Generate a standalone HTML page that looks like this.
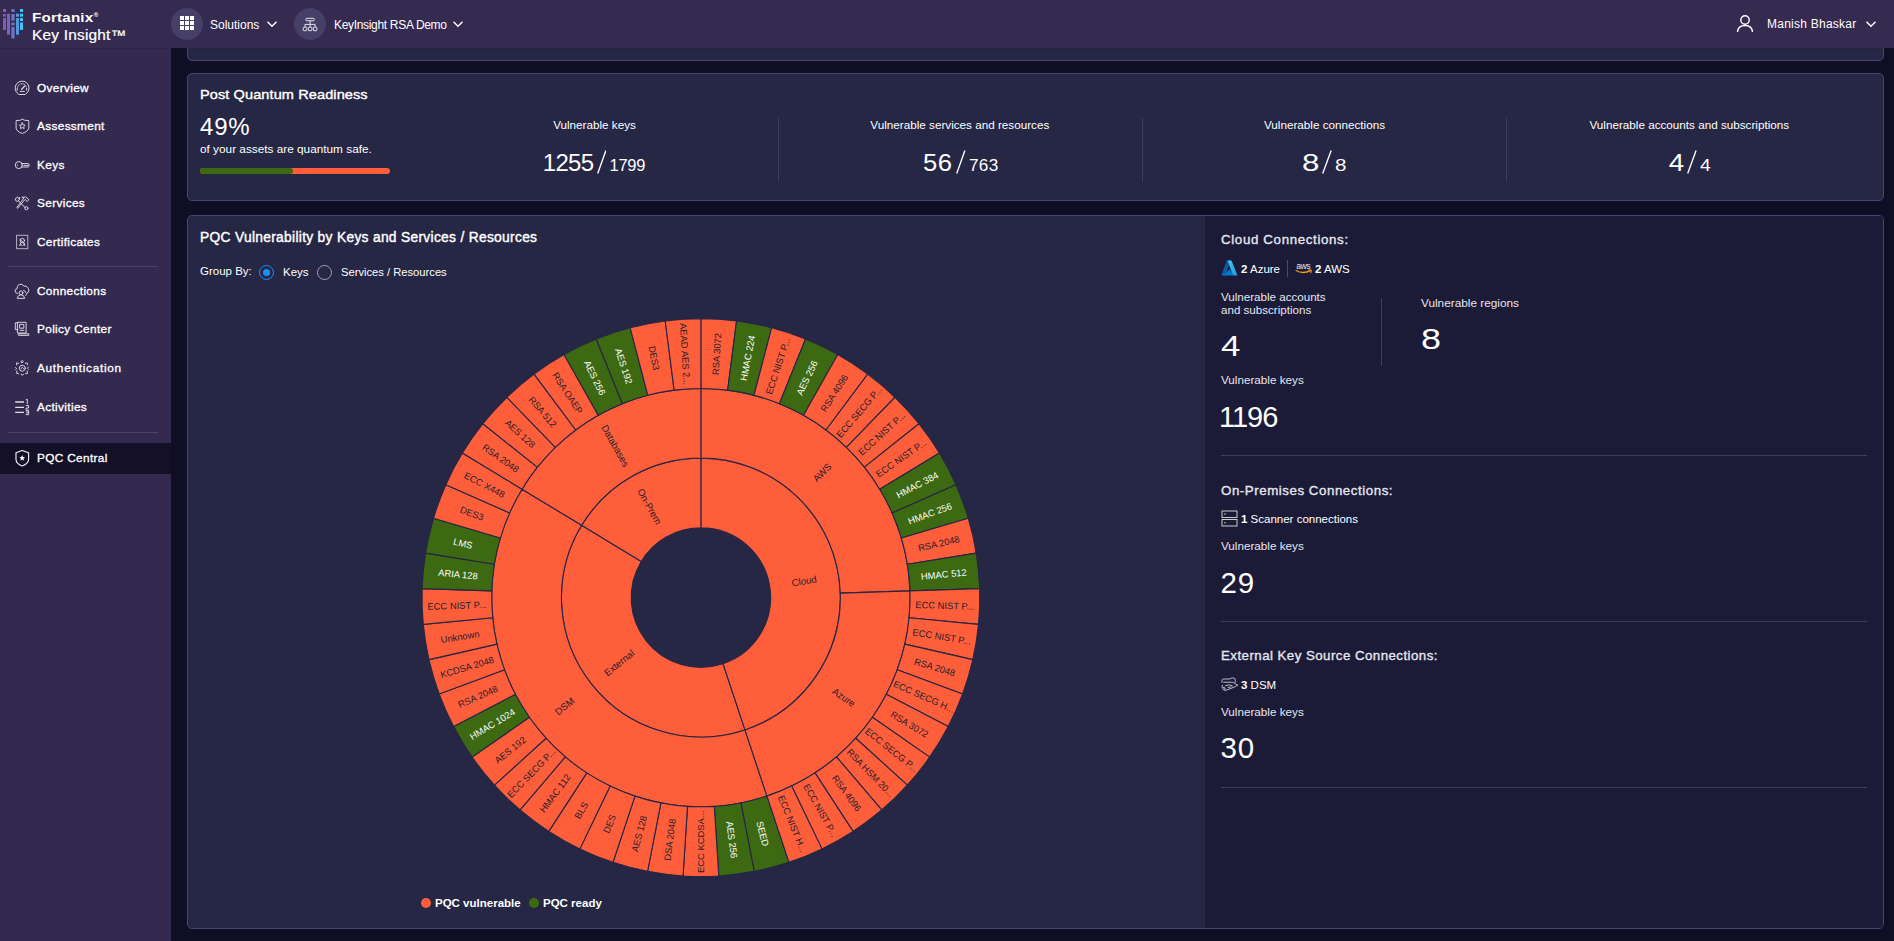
<!DOCTYPE html>
<html><head><meta charset="utf-8">
<style>
*{margin:0;padding:0;box-sizing:border-box}
html,body{width:1894px;height:941px;overflow:hidden;background:#100e24;font-family:"Liberation Sans", sans-serif;color:#fff}
.abs{position:absolute}
#header{position:absolute;left:0;top:0;width:1894px;height:48px;background:#352a50;z-index:10;box-shadow:0 1px 0 rgba(20,15,40,0.18)}
#side{position:absolute;left:0;top:48px;width:171px;height:893px;background:#342a4f}
.nav-ic{position:absolute;left:12px;width:20px;height:20px}
.nav-t{position:absolute;left:37px;height:16px;line-height:16px;font-size:11.8px;font-weight:normal;-webkit-text-stroke:0.32px #fff;white-space:nowrap;letter-spacing:0.35px}
.hl{position:absolute;left:0;top:443px;width:171px;height:31px;background:#131027}
.sdiv{position:absolute;left:8px;width:150px;height:1px;background:#4b4169}
.card{position:absolute;left:187px;width:1697px;background:#262645;border:1px solid #4b4370;border-radius:5px}
.stat-l{position:absolute;top:117.5px;width:400px;text-align:center;font-size:11.7px;white-space:nowrap}
.stat-n{position:absolute;top:148px;width:400px;text-align:center;white-space:nowrap;height:30px;line-height:30px}
.big{font-size:24px}
.sl{font-size:24px;margin:0 2.5px 0 3px}
.small{font-size:16.5px}
.vdiv{position:absolute;top:118px;width:1px;height:64px;background:#3e3c5e}
.t{position:absolute;white-space:nowrap}
.hr{position:absolute;left:1221px;width:646px;height:1px;background:#3d3b60}
</style></head><body>
<div id="header">
  <svg class="abs" style="left:0;top:0" width="30" height="48" viewBox="0 0 30 48">
    <rect x="3" y="9" width="3" height="3" fill="#8758b8"/><rect x="3" y="14" width="3" height="2.6" fill="#8758b8"/><rect x="3" y="18" width="3" height="12" fill="#8758b8"/>
    <rect x="7" y="13.7" width="3" height="21" fill="#7863bf"/>
    <rect x="11.3" y="9" width="3.3" height="3" fill="#6876c8"/><rect x="11.3" y="14" width="3.3" height="6.7" fill="#6876c8"/><rect x="11.3" y="22.5" width="3.3" height="3" fill="#6876c8"/><rect x="11.3" y="27" width="3.3" height="11.4" fill="#6876c8"/>
    <rect x="16" y="13.7" width="3" height="3" fill="#4f98da"/><rect x="16" y="18" width="3" height="16.7" fill="#4f98da"/>
    <rect x="20" y="9" width="3" height="3" fill="#38c6f2"/><rect x="20" y="13.7" width="3" height="3" fill="#38c6f2"/><rect x="20" y="18" width="3" height="3" fill="#38c6f2"/><rect x="20" y="22.5" width="3" height="7.5" fill="#38c6f2"/>
  </svg>
  <div class="t" style="left:31.5px;top:7px;font-size:13.6px;font-weight:bold;line-height:16px;letter-spacing:0.15px;transform:scaleX(1.12);transform-origin:left center">Fortanix<span style="font-size:6px;vertical-align:5px">®</span></div>
  <div class="t" style="left:31.5px;top:26px;font-size:14px;line-height:18px;letter-spacing:0.2px;transform:scaleX(1.1);transform-origin:left center;-webkit-text-stroke:0.2px #fff">Key Insight™</div>
  <div class="abs" style="left:171px;top:8px;width:32px;height:32px;border-radius:50%;background:#463f67"></div>
  <svg class="abs" style="left:179px;top:15px" width="16" height="16" viewBox="0 0 16 16"><g fill="#fff">
    <rect x="1" y="1" width="4" height="4"/><rect x="6" y="1" width="4" height="4"/><rect x="11" y="1" width="4" height="4"/>
    <rect x="1" y="6" width="4" height="4"/><rect x="6" y="6" width="4" height="4"/><rect x="11" y="6" width="4" height="4"/>
    <rect x="1" y="11" width="4" height="4"/><rect x="6" y="11" width="4" height="4"/><rect x="11" y="11" width="4" height="4"/></g></svg>
  <div class="t" style="left:210px;top:17px;font-size:12px;line-height:16px">Solutions</div>
  <svg class="abs" style="left:266px;top:20px" width="12" height="8" viewBox="0 0 12 8"><path d="M1.5 1.8 L6 6.3 L10.5 1.8" stroke="#fff" stroke-width="1.4" fill="none"/></svg>
  <div class="abs" style="left:294px;top:8px;width:32px;height:32px;border-radius:50%;background:#463f67"></div>
  <svg class="abs" style="left:300px;top:15px" width="20" height="20" viewBox="0 0 20 20"><g stroke="#e2e0ec" stroke-width="1" fill="none">
    <rect x="5.9" y="3.3" width="8.4" height="2.5" rx="0.9"/><path d="M10.1 5.8 V9.4 M5 12.1 V9.4 H15.1 V12.1 M10.1 9.4 V12.1"/>
    <rect x="3.2" y="12.2" width="3.6" height="3.5" rx="0.7"/><rect x="8.3" y="12.2" width="3.6" height="3.5" rx="0.7"/><rect x="13.3" y="12.2" width="3.6" height="3.5" rx="0.7"/></g></svg>
  <div class="t" style="left:334px;top:17px;font-size:12px;line-height:16px;letter-spacing:-0.32px">KeyInsight RSA Demo</div>
  <svg class="abs" style="left:452px;top:20px" width="12" height="8" viewBox="0 0 12 8"><path d="M1.5 1.8 L6 6.3 L10.5 1.8" stroke="#fff" stroke-width="1.4" fill="none"/></svg>
  <svg class="abs" style="left:1736px;top:14px" width="18" height="19" viewBox="0 0 18 19"><g stroke="#fff" stroke-width="1.4" fill="none"><circle cx="9" cy="6" r="4.2"/><path d="M1.5 18 Q2 11.5 9 11.5 Q16 11.5 16.5 18"/></g></svg>
  <div class="t" style="left:1767px;top:15.5px;font-size:12px;line-height:16px;letter-spacing:0.25px">Manish Bhaskar</div>
  <svg class="abs" style="left:1865px;top:20px" width="12" height="8" viewBox="0 0 12 8"><path d="M1.5 1.8 L6 6.3 L10.5 1.8" stroke="#fff" stroke-width="1.4" fill="none"/></svg>
</div>
<div id="side">
</div>
<div class="hl"></div>
<div class="sdiv" style="top:266px"></div>
<div class="sdiv" style="top:432px"></div>
<div class="nav-ic" style="top:78px"><svg width="20" height="20" viewBox="0 0 20 20"><path d="M6 15.8 A7 7 0 1 1 14.2 15.8" stroke="#dddbe8" stroke-width="0.95" fill="none" stroke-linecap="round" stroke-linejoin="round"/><path d="M5.6 9 A4.6 4.6 0 0 1 14.4 9" stroke="#dddbe8" stroke-width="0.95" fill="none" stroke-linecap="round" stroke-linejoin="round" stroke-dasharray="1.2 1.3"/><path d="M5.2 12.2 V10.2 M14.6 12.2 V10.2" stroke="#dddbe8" stroke-width="0.95" fill="none" stroke-linecap="round" stroke-linejoin="round"/><path d="M9.6 11.3 L12.6 8.3" stroke="#dddbe8" stroke-width="1.3" stroke-linecap="round"/><path d="M8.2 13.4 H12.4 M6.8 16.5 H13.2" stroke="#dddbe8" stroke-width="0.95" fill="none" stroke-linecap="round" stroke-linejoin="round"/></svg></div><div class="nav-t" style="top:80px">Overview</div>
<div class="nav-ic" style="top:116px"><svg width="20" height="20" viewBox="0 0 20 20"><path d="M10.3 3.1 L12.3 4.2 L16.8 4.6 V12.2 Q15.8 15.8 10.3 17.4 Q4.8 15.8 4.1 12.2 V4.6 L8.3 4.2 Z" stroke="#dddbe8" stroke-width="0.95" fill="none" stroke-linecap="round" stroke-linejoin="round"/><path d="M10.3 6.9 L11.2 8.9 L13.2 9.2 L11.7 10.6 L12.1 12.6 L10.3 11.6 L8.5 12.6 L8.9 10.6 L7.4 9.2 L9.4 8.9 Z" stroke="#dddbe8" stroke-width="0.95" fill="none" stroke-linecap="round" stroke-linejoin="round"/></svg></div><div class="nav-t" style="top:118px">Assessment</div>
<div class="nav-ic" style="top:155px"><svg width="20" height="20" viewBox="0 0 20 20"><circle cx="6.8" cy="10.1" r="3.5" stroke="#dddbe8" stroke-width="0.95" fill="none" stroke-linecap="round" stroke-linejoin="round"/><path d="M10.1 8.6 H16.2 Q17.2 8.6 17.2 10.3 Q17.2 12 16.2 12 H10.1" stroke="#dddbe8" stroke-width="0.95" fill="none" stroke-linecap="round" stroke-linejoin="round"/><path d="M12 10.4 H16" stroke="#dddbe8" stroke-width="0.95" fill="none" stroke-linecap="round" stroke-linejoin="round"/><circle cx="5.3" cy="10.1" r="0.6" fill="#dddbe8"/></svg></div><div class="nav-t" style="top:157px">Keys</div>
<div class="nav-ic" style="top:193px"><svg width="20" height="20" viewBox="0 0 20 20"><path d="M4.2 5.2 L5.6 3.9 L6.6 5.6 L7.8 4.3 Q7.6 7.5 5.5 8.5 Q3.3 8.3 3.2 6.2 Z" stroke="#dddbe8" stroke-width="0.95" fill="none" stroke-linecap="round" stroke-linejoin="round"/><path d="M6.5 8 L13 14.5" stroke="#dddbe8" stroke-width="0.95" fill="none" stroke-linecap="round" stroke-linejoin="round"/><circle cx="14.3" cy="15.2" r="1.6" stroke="#dddbe8" stroke-width="0.95" fill="none" stroke-linecap="round" stroke-linejoin="round"/><path d="M10.2 4.2 Q13.8 2.5 16.8 6.5 L15.3 8.6 L13 6.4 L5.7 15.3 L4.8 14.5 L11.6 5.5 Z" stroke="#dddbe8" stroke-width="0.95" fill="none" stroke-linecap="round" stroke-linejoin="round"/></svg></div><div class="nav-t" style="top:195px">Services</div>
<div class="nav-ic" style="top:232px"><svg width="20" height="20" viewBox="0 0 20 20"><rect x="4.6" y="3.3" width="11.2" height="13.4" stroke="#b8b4cc" stroke-width="0.95" fill="none"/><circle cx="10.3" cy="8.6" r="2.2" stroke="#dddbe8" stroke-width="0.95" fill="none" stroke-linecap="round" stroke-linejoin="round"/><path d="M9 10.6 L7.6 13.4 L9.4 12.8 L10.3 13.6 L11.2 12.8 L12.9 13.4 L11.5 10.6" stroke="#dddbe8" stroke-width="0.95" fill="none" stroke-linecap="round" stroke-linejoin="round"/><path d="M8 7.5 L12.5 11.5" stroke="#dddbe8" stroke-width="0.95" fill="none" stroke-linecap="round" stroke-linejoin="round"/></svg></div><div class="nav-t" style="top:234px">Certificates</div>
<div class="nav-ic" style="top:281px"><svg width="20" height="20" viewBox="0 0 20 20"><path d="M5.5 12.5 Q3 12.3 3.1 9.8 Q3.3 7.8 5.2 7.6 Q5 3.3 9 3.2 Q11 3.3 11.8 5.2 Q14 4.2 15.6 6.4 Q16.8 7.5 16.8 9.5 Q16.8 11.6 15.2 12" stroke="#dddbe8" stroke-width="0.95" fill="none" stroke-linecap="round" stroke-linejoin="round"/><circle cx="9" cy="11.8" r="1.9" stroke="#dddbe8" stroke-width="0.95" fill="none" stroke-linecap="round" stroke-linejoin="round"/><path d="M5.3 17 Q5.6 13.8 9 13.8 Q12.2 13.8 12.6 17 Z" stroke="#dddbe8" stroke-width="0.95" fill="none" stroke-linecap="round" stroke-linejoin="round"/><path d="M11.5 9.2 Q13.2 9.6 13.6 11.4 L14.8 12.6 L13.8 14.4" stroke="#dddbe8" stroke-width="0.95" fill="none" stroke-linecap="round" stroke-linejoin="round"/></svg></div><div class="nav-t" style="top:283px">Connections</div>
<div class="nav-ic" style="top:319px"><svg width="20" height="20" viewBox="0 0 20 20"><path d="M5.8 3.8 H3.3 V10.6 H5.8" stroke="#dddbe8" stroke-width="0.95" fill="none" stroke-linecap="round" stroke-linejoin="round"/><rect x="5.8" y="3.3" width="8.3" height="10.7" stroke="#dddbe8" stroke-width="0.95" fill="none" stroke-linecap="round" stroke-linejoin="round"/><rect x="8" y="5.4" width="3.8" height="3.8" stroke="#dddbe8" stroke-width="0.95" fill="none" stroke-linecap="round" stroke-linejoin="round"/><path d="M8 11.3 H12" stroke="#dddbe8" stroke-width="0.95" fill="none" stroke-linecap="round" stroke-linejoin="round"/><path d="M6.8 14.8 H16.8 V16.4 H7.2 Q6.2 16.4 6.2 15.6 Q6.2 14.8 7 14.8" stroke="#dddbe8" stroke-width="0.95" fill="none" stroke-linecap="round" stroke-linejoin="round"/></svg></div><div class="nav-t" style="top:321px">Policy Center</div>
<div class="nav-ic" style="top:358px"><svg width="20" height="20" viewBox="0 0 20 20"><path d="M4.7 5.2 H6.6 M13.4 5.2 H15.4 V6.7 M4.7 5.2 V7 M3.6 9.5 L4.7 10.6 L3.6 11.5 M16.4 9 L15.4 10.3 L16.4 11.2 M4.8 13 V15.6 H6.5 M15.3 13 V15.6 H13.5 M9 3.5 L10.3 2.5 L11.5 3.5 L10.3 4.6 Z M9 16.4 L10.3 17 L11.5 16.4" stroke="#dddbe8" stroke-width="0.95" fill="none" stroke-linecap="round" stroke-linejoin="round"/><circle cx="10.3" cy="10.2" r="3" stroke="#dddbe8" stroke-width="0.95" fill="none" stroke-linecap="round" stroke-linejoin="round"/><path d="M9 10.6 L10.4 9.4 L11.6 10.6" stroke="#dddbe8" stroke-width="0.95" fill="none" stroke-linecap="round" stroke-linejoin="round"/></svg></div><div class="nav-t" style="top:360px;letter-spacing:0.72px">Authentication</div>
<div class="nav-ic" style="top:397px"><svg width="20" height="20" viewBox="0 0 20 20"><path d="M3.2 5 H12 M3.2 10.4 H12 M3.2 15.4 H12" stroke="#dddbe8" stroke-width="1.3" stroke-linecap="butt"/><path d="M14.2 2.6 L15.3 2.4 V6.8 M14.2 8.6 H16.6 V11 H14.2 V13.2 H16.6 M14.2 14 H16.6 V17.6 H14.2 M14.5 15.8 H16.6" stroke="#dddbe8" stroke-width="0.95" fill="none" stroke-linecap="round" stroke-linejoin="round"/></svg></div><div class="nav-t" style="top:399px">Activities</div>
<div class="nav-ic" style="top:448px"><svg width="20" height="20" viewBox="0 0 20 20"><path d="M10.2 2.5 L16.6 4.8 V11.5 Q16.2 15.8 10.2 18 Q4.2 15.8 4 11.5 V4.8 Z" stroke="#f2f2f8" stroke-width="1.15" fill="none" stroke-linejoin="round"/><path d="M10.2 6.9 L11 9 L13.1 9.2 L11.5 10.6 L12 12.7 L10.2 11.6 L8.4 12.7 L8.9 10.6 L7.3 9.2 L9.4 9 Z" fill="#ffffff"/></svg></div><div class="nav-t" style="top:450px">PQC Central</div>

<!-- top cut card -->
<div class="card" style="top:20px;height:41px"></div>


<!-- PQR card -->
<div class="card" style="top:73px;height:128px"></div>
<div class="t" style="left:200px;top:87px;font-size:13.5px;font-weight:normal;-webkit-text-stroke:0.4px #fff;line-height:16px;letter-spacing:0.1px;transform:scaleX(1.075);transform-origin:left center">Post Quantum Readiness</div>
<div class="t" style="left:200px;top:114px;font-size:24px;line-height:26px;letter-spacing:0.8px">49%</div>
<div class="t" style="left:200px;top:142px;font-size:11.8px;line-height:14px">of your assets are quantum safe.</div>
<div class="abs" style="left:200px;top:168px;width:190px;height:6px;border-radius:3px;background:#ff5e3a"></div>
<div class="abs" style="left:200px;top:168px;width:93px;height:6px;border-radius:3px;background:#3d6912"></div>
<div class="stat-l" style="left:394.5px">Vulnerable keys</div><div class="t big" style="right:1300.6px;top:147.5px;line-height:30px;letter-spacing:-0.7px;transform:scaleX(1);transform-origin:right center">1255</div><svg class="abs" style="left:596.9px;top:150px" width="9.6" height="24" viewBox="0 0 9.6 24"><line x1="0.7" y1="23.5" x2="8.9" y2="0.5" stroke="#fff" stroke-width="1.35"/></svg><div class="t small" style="left:609.6px;top:155px;line-height:20px;letter-spacing:-0.3px;transform:scaleX(1);transform-origin:left center">1799</div>
<div class="stat-l" style="left:759.8px">Vulnerable services and resources</div><div class="t big" style="right:941.5px;top:147.5px;line-height:30px;letter-spacing:0.3px;transform:scaleX(1.07);transform-origin:right center">56</div><svg class="abs" style="left:956.0px;top:150px" width="9.6" height="24" viewBox="0 0 9.6 24"><line x1="0.7" y1="23.5" x2="8.9" y2="0.5" stroke="#fff" stroke-width="1.35"/></svg><div class="t small" style="left:968.9px;top:155px;line-height:20px;letter-spacing:0.3px;transform:scaleX(1.04);transform-origin:left center">763</div>
<div class="stat-l" style="left:1124.5px">Vulnerable connections</div><div class="t big" style="right:574.8px;top:147.5px;line-height:30px;letter-spacing:0;transform:scaleX(1.3);transform-origin:right center">8</div><svg class="abs" style="left:1322.2px;top:150px" width="9.9" height="24" viewBox="0 0 9.9 24"><line x1="0.7" y1="23.5" x2="9.2" y2="0.5" stroke="#fff" stroke-width="1.35"/></svg><div class="t small" style="left:1335.2px;top:155px;line-height:20px;letter-spacing:0;transform:scaleX(1.25);transform-origin:left center">8</div>
<div class="stat-l" style="left:1489.3px">Vulnerable accounts and subscriptions</div><div class="t big" style="right:210.0px;top:147.5px;line-height:30px;letter-spacing:0;transform:scaleX(1.16);transform-origin:right center">4</div><svg class="abs" style="left:1686.9px;top:150px" width="9.8" height="24" viewBox="0 0 9.8 24"><line x1="0.7" y1="23.5" x2="9.1" y2="0.5" stroke="#fff" stroke-width="1.35"/></svg><div class="t small" style="left:1699.9px;top:155px;line-height:20px;letter-spacing:0;transform:scaleX(1.17);transform-origin:left center">4</div>
<div class="vdiv" style="left:778px"></div>
<div class="vdiv" style="left:1142px"></div>
<div class="vdiv" style="left:1506px"></div>

<!-- chart card -->
<div class="card" style="top:215px;height:714px;overflow:hidden"><div class="abs" style="left:1017px;top:0;width:680px;height:714px;background:#1b1b37"></div></div>
<div class="t" style="left:200px;top:229.7px;font-size:13.8px;font-weight:normal;-webkit-text-stroke:0.4px #fff;line-height:16px;letter-spacing:0.3px">PQC Vulnerability by Keys and Services / Resources</div>
<div class="t" style="left:200px;top:263px;font-size:11.5px;line-height:16px">Group By:</div>
<div class="abs" style="left:258.5px;top:264.5px;width:15px;height:15px;border-radius:50%;border:1.3px solid #1890ff"></div>
<div class="abs" style="left:262.5px;top:268.5px;width:7px;height:7px;border-radius:50%;background:#1890ff"></div>
<div class="t" style="left:283px;top:264px;font-size:11.5px;line-height:16px">Keys</div>
<div class="abs" style="left:316.5px;top:264.5px;width:15px;height:15px;border-radius:50%;border:1.3px solid #a09eb5"></div>
<div class="t" style="left:341px;top:264px;font-size:11.2px;line-height:16px">Services / Resources</div>
<svg width="1894" height="941" viewBox="0 0 1894 941" style="position:absolute;left:0;top:0">
<g stroke="#262645" stroke-width="1.1" stroke-linejoin="round">
<path d="M700.90,458.15A139.45,139.45 0 0 1 744.84,729.95L722.87,663.77A69.72,69.72 0 0 0 700.90,527.88Z" fill="#ff5e3a"/>
<path d="M744.84,729.95A139.45,139.45 0 0 1 581.65,525.31L641.28,561.46A69.72,69.72 0 0 0 722.87,663.77Z" fill="#ff5e3a"/>
<path d="M581.65,525.31A139.45,139.45 0 0 1 700.90,458.15L700.90,527.88A69.72,69.72 0 0 0 641.28,561.46Z" fill="#ff5e3a"/>
<path d="M700.90,388.43A209.17,209.17 0 0 1 909.97,590.90L840.28,593.13A139.45,139.45 0 0 0 700.90,458.15Z" fill="#ff5e3a"/>
<path d="M909.97,590.90A209.17,209.17 0 0 1 766.81,796.12L744.84,729.95A139.45,139.45 0 0 0 840.28,593.13Z" fill="#ff5e3a"/>
<path d="M766.81,796.12A209.17,209.17 0 0 1 522.03,489.17L581.65,525.31A139.45,139.45 0 0 0 744.84,729.95Z" fill="#ff5e3a"/>
<path d="M522.03,489.17A209.17,209.17 0 0 1 700.90,388.43L700.90,458.15A139.45,139.45 0 0 0 581.65,525.31Z" fill="#ff5e3a"/>
<path d="M700.90,318.70A278.90,278.90 0 0 1 736.56,320.99L727.65,390.14A209.17,209.17 0 0 0 700.90,388.43Z" fill="#ff5e3a"/>
<path d="M736.56,320.99A278.90,278.90 0 0 1 771.64,327.82L753.96,395.27A209.17,209.17 0 0 0 727.65,390.14Z" fill="#3d6912"/>
<path d="M771.64,327.82A278.90,278.90 0 0 1 805.56,339.08L779.40,403.71A209.17,209.17 0 0 0 753.96,395.27Z" fill="#ff5e3a"/>
<path d="M805.56,339.08A278.90,278.90 0 0 1 837.76,354.59L803.55,415.34A209.17,209.17 0 0 0 779.40,403.71Z" fill="#3d6912"/>
<path d="M837.76,354.59A278.90,278.90 0 0 1 867.71,374.09L826.01,429.96A209.17,209.17 0 0 0 803.55,415.34Z" fill="#ff5e3a"/>
<path d="M867.71,374.09A278.90,278.90 0 0 1 894.93,397.25L846.42,447.34A209.17,209.17 0 0 0 826.01,429.96Z" fill="#ff5e3a"/>
<path d="M894.93,397.25A278.90,278.90 0 0 1 918.95,423.71L864.44,467.18A209.17,209.17 0 0 0 846.42,447.34Z" fill="#ff5e3a"/>
<path d="M918.95,423.71A278.90,278.90 0 0 1 939.40,453.02L879.77,489.17A209.17,209.17 0 0 0 864.44,467.18Z" fill="#ff5e3a"/>
<path d="M939.40,453.02A278.90,278.90 0 0 1 955.93,484.71L892.17,512.93A209.17,209.17 0 0 0 879.77,489.17Z" fill="#3d6912"/>
<path d="M955.93,484.71A278.90,278.90 0 0 1 968.27,518.25L901.43,538.08A209.17,209.17 0 0 0 892.17,512.93Z" fill="#3d6912"/>
<path d="M968.27,518.25A278.90,278.90 0 0 1 976.22,553.09L907.39,564.22A209.17,209.17 0 0 0 901.43,538.08Z" fill="#ff5e3a"/>
<path d="M976.22,553.09A278.90,278.90 0 0 1 979.66,588.66L909.97,590.90A209.17,209.17 0 0 0 907.39,564.22Z" fill="#3d6912"/>
<path d="M979.66,588.66A278.90,278.90 0 0 1 978.51,624.38L909.11,617.69A209.17,209.17 0 0 0 909.97,590.90Z" fill="#ff5e3a"/>
<path d="M978.51,624.38A278.90,278.90 0 0 1 972.81,659.66L904.83,644.15A209.17,209.17 0 0 0 909.11,617.69Z" fill="#ff5e3a"/>
<path d="M972.81,659.66A278.90,278.90 0 0 1 962.64,693.92L897.20,669.84A209.17,209.17 0 0 0 904.83,644.15Z" fill="#ff5e3a"/>
<path d="M962.64,693.92A278.90,278.90 0 0 1 948.17,726.60L886.35,694.35A209.17,209.17 0 0 0 897.20,669.84Z" fill="#ff5e3a"/>
<path d="M948.17,726.60A278.90,278.90 0 0 1 929.65,757.16L872.46,717.27A209.17,209.17 0 0 0 886.35,694.35Z" fill="#ff5e3a"/>
<path d="M929.65,757.16A278.90,278.90 0 0 1 907.36,785.10L855.75,738.23A209.17,209.17 0 0 0 872.46,717.27Z" fill="#ff5e3a"/>
<path d="M907.36,785.10A278.90,278.90 0 0 1 881.69,809.97L836.49,756.88A209.17,209.17 0 0 0 855.75,738.23Z" fill="#ff5e3a"/>
<path d="M881.69,809.97A278.90,278.90 0 0 1 853.05,831.34L815.01,772.91A209.17,209.17 0 0 0 836.49,756.88Z" fill="#ff5e3a"/>
<path d="M853.05,831.34A278.90,278.90 0 0 1 821.91,848.88L791.66,786.06A209.17,209.17 0 0 0 815.01,772.91Z" fill="#ff5e3a"/>
<path d="M821.91,848.88A278.90,278.90 0 0 1 788.78,862.29L766.81,796.12A209.17,209.17 0 0 0 791.66,786.06Z" fill="#ff5e3a"/>
<path d="M788.78,862.29A278.90,278.90 0 0 1 754.21,871.36L740.89,802.92A209.17,209.17 0 0 0 766.81,796.12Z" fill="#3d6912"/>
<path d="M754.21,871.36A278.90,278.90 0 0 1 718.77,875.93L714.30,806.35A209.17,209.17 0 0 0 740.89,802.92Z" fill="#3d6912"/>
<path d="M718.77,875.93A278.90,278.90 0 0 1 683.03,875.93L687.50,806.35A209.17,209.17 0 0 0 714.30,806.35Z" fill="#ff5e3a"/>
<path d="M683.03,875.93A278.90,278.90 0 0 1 647.59,871.36L660.91,802.92A209.17,209.17 0 0 0 687.50,806.35Z" fill="#ff5e3a"/>
<path d="M647.59,871.36A278.90,278.90 0 0 1 613.02,862.29L634.99,796.12A209.17,209.17 0 0 0 660.91,802.92Z" fill="#ff5e3a"/>
<path d="M613.02,862.29A278.90,278.90 0 0 1 579.89,848.88L610.14,786.06A209.17,209.17 0 0 0 634.99,796.12Z" fill="#ff5e3a"/>
<path d="M579.89,848.88A278.90,278.90 0 0 1 548.75,831.34L586.79,772.91A209.17,209.17 0 0 0 610.14,786.06Z" fill="#ff5e3a"/>
<path d="M548.75,831.34A278.90,278.90 0 0 1 520.11,809.97L565.31,756.88A209.17,209.17 0 0 0 586.79,772.91Z" fill="#ff5e3a"/>
<path d="M520.11,809.97A278.90,278.90 0 0 1 494.44,785.10L546.05,738.23A209.17,209.17 0 0 0 565.31,756.88Z" fill="#ff5e3a"/>
<path d="M494.44,785.10A278.90,278.90 0 0 1 472.15,757.16L529.34,717.27A209.17,209.17 0 0 0 546.05,738.23Z" fill="#ff5e3a"/>
<path d="M472.15,757.16A278.90,278.90 0 0 1 453.63,726.60L515.45,694.35A209.17,209.17 0 0 0 529.34,717.27Z" fill="#3d6912"/>
<path d="M453.63,726.60A278.90,278.90 0 0 1 439.16,693.92L504.60,669.84A209.17,209.17 0 0 0 515.45,694.35Z" fill="#ff5e3a"/>
<path d="M439.16,693.92A278.90,278.90 0 0 1 428.99,659.66L496.97,644.15A209.17,209.17 0 0 0 504.60,669.84Z" fill="#ff5e3a"/>
<path d="M428.99,659.66A278.90,278.90 0 0 1 423.29,624.38L492.69,617.69A209.17,209.17 0 0 0 496.97,644.15Z" fill="#ff5e3a"/>
<path d="M423.29,624.38A278.90,278.90 0 0 1 422.14,588.66L491.83,590.90A209.17,209.17 0 0 0 492.69,617.69Z" fill="#ff5e3a"/>
<path d="M422.14,588.66A278.90,278.90 0 0 1 425.58,553.09L494.41,564.22A209.17,209.17 0 0 0 491.83,590.90Z" fill="#3d6912"/>
<path d="M425.58,553.09A278.90,278.90 0 0 1 433.53,518.25L500.37,538.08A209.17,209.17 0 0 0 494.41,564.22Z" fill="#3d6912"/>
<path d="M433.53,518.25A278.90,278.90 0 0 1 445.87,484.71L509.63,512.93A209.17,209.17 0 0 0 500.37,538.08Z" fill="#ff5e3a"/>
<path d="M445.87,484.71A278.90,278.90 0 0 1 462.40,453.02L522.03,489.17A209.17,209.17 0 0 0 509.63,512.93Z" fill="#ff5e3a"/>
<path d="M462.40,453.02A278.90,278.90 0 0 1 482.85,423.71L537.36,467.18A209.17,209.17 0 0 0 522.03,489.17Z" fill="#ff5e3a"/>
<path d="M482.85,423.71A278.90,278.90 0 0 1 506.87,397.25L555.38,447.34A209.17,209.17 0 0 0 537.36,467.18Z" fill="#ff5e3a"/>
<path d="M506.87,397.25A278.90,278.90 0 0 1 534.09,374.09L575.79,429.96A209.17,209.17 0 0 0 555.38,447.34Z" fill="#ff5e3a"/>
<path d="M534.09,374.09A278.90,278.90 0 0 1 564.04,354.59L598.25,415.34A209.17,209.17 0 0 0 575.79,429.96Z" fill="#ff5e3a"/>
<path d="M564.04,354.59A278.90,278.90 0 0 1 596.24,339.08L622.40,403.71A209.17,209.17 0 0 0 598.25,415.34Z" fill="#3d6912"/>
<path d="M596.24,339.08A278.90,278.90 0 0 1 630.16,327.82L647.84,395.27A209.17,209.17 0 0 0 622.40,403.71Z" fill="#3d6912"/>
<path d="M630.16,327.82A278.90,278.90 0 0 1 665.24,320.99L674.15,390.14A209.17,209.17 0 0 0 647.84,395.27Z" fill="#ff5e3a"/>
<path d="M665.24,320.99A278.90,278.90 0 0 1 700.90,318.70L700.90,388.43A209.17,209.17 0 0 0 674.15,390.14Z" fill="#ff5e3a"/>
</g>
<g font-family="Liberation Sans, sans-serif">
<text x="804.15" y="580.91" transform="rotate(-9.18 804.15 580.91)" font-size="9.7" fill="#1e1e2e" text-anchor="middle" dominant-baseline="central">Cloud</text>
<text x="619.13" y="662.81" transform="rotate(-38.57 619.13 662.81)" font-size="9.7" fill="#1e1e2e" text-anchor="middle" dominant-baseline="central">External</text>
<text x="649.58" y="506.47" transform="rotate(60.61 649.58 506.47)" font-size="9.7" fill="#1e1e2e" text-anchor="middle" dominant-baseline="central">On-Prem</text>
<text x="822.17" y="472.38" transform="rotate(-45.92 822.17 472.38)" font-size="9.7" fill="#1e1e2e" text-anchor="middle" dominant-baseline="central">AWS</text>
<text x="843.87" y="697.33" transform="rotate(34.90 843.87 697.33)" font-size="9.7" fill="#1e1e2e" text-anchor="middle" dominant-baseline="central">Azure</text>
<text x="564.62" y="706.28" transform="rotate(-38.57 564.62 706.28)" font-size="9.7" fill="#1e1e2e" text-anchor="middle" dominant-baseline="central">DSM</text>
<text x="615.36" y="445.72" transform="rotate(60.61 615.36 445.72)" font-size="9.7" fill="#1e1e2e" text-anchor="middle" dominant-baseline="central">Databases</text>
<text x="716.54" y="354.06" transform="rotate(-86.33 716.54 354.06)" font-size="9.4" fill="#1e1e2e" text-anchor="middle" dominant-baseline="central">RSA 3072</text>
<text x="747.55" y="358.06" transform="rotate(-78.98 747.55 358.06)" font-size="9.4" fill="#ffffff" text-anchor="middle" dominant-baseline="central">HMAC 224</text>
<text x="777.80" y="365.99" transform="rotate(-71.63 777.80 365.99)" font-size="9.4" fill="#1e1e2e" text-anchor="middle" dominant-baseline="central">ECC NIST P...</text>
<text x="806.78" y="377.73" transform="rotate(-64.29 806.78 377.73)" font-size="9.4" fill="#ffffff" text-anchor="middle" dominant-baseline="central">AES 256</text>
<text x="834.03" y="393.08" transform="rotate(-56.94 834.03 393.08)" font-size="9.4" fill="#1e1e2e" text-anchor="middle" dominant-baseline="central">RSA 4096</text>
<text x="859.09" y="411.78" transform="rotate(-49.59 859.09 411.78)" font-size="9.4" fill="#1e1e2e" text-anchor="middle" dominant-baseline="central">ECC SECG P...</text>
<text x="881.56" y="433.53" transform="rotate(-42.24 881.56 433.53)" font-size="9.4" fill="#1e1e2e" text-anchor="middle" dominant-baseline="central">ECC NIST P...</text>
<text x="901.05" y="457.98" transform="rotate(-34.90 901.05 457.98)" font-size="9.4" fill="#1e1e2e" text-anchor="middle" dominant-baseline="central">ECC NIST P...</text>
<text x="917.26" y="484.72" transform="rotate(-27.55 917.26 484.72)" font-size="9.4" fill="#ffffff" text-anchor="middle" dominant-baseline="central">HMAC 384</text>
<text x="929.92" y="513.32" transform="rotate(-20.20 929.92 513.32)" font-size="9.4" fill="#ffffff" text-anchor="middle" dominant-baseline="central">HMAC 256</text>
<text x="938.82" y="543.30" transform="rotate(-12.86 938.82 543.30)" font-size="9.4" fill="#1e1e2e" text-anchor="middle" dominant-baseline="central">RSA 2048</text>
<text x="943.81" y="574.17" transform="rotate(-5.51 943.81 574.17)" font-size="9.4" fill="#ffffff" text-anchor="middle" dominant-baseline="central">HMAC 512</text>
<text x="944.81" y="605.42" transform="rotate(1.84 944.81 605.42)" font-size="9.4" fill="#1e1e2e" text-anchor="middle" dominant-baseline="central">ECC NIST P...</text>
<text x="941.81" y="636.55" transform="rotate(9.18 941.81 636.55)" font-size="9.4" fill="#1e1e2e" text-anchor="middle" dominant-baseline="central">ECC NIST P...</text>
<text x="934.85" y="667.04" transform="rotate(16.53 934.85 667.04)" font-size="9.4" fill="#1e1e2e" text-anchor="middle" dominant-baseline="central">RSA 2048</text>
<text x="924.05" y="696.38" transform="rotate(23.88 924.05 696.38)" font-size="9.4" fill="#1e1e2e" text-anchor="middle" dominant-baseline="central">ECC SECG H...</text>
<text x="909.59" y="724.11" transform="rotate(31.22 909.59 724.11)" font-size="9.4" fill="#1e1e2e" text-anchor="middle" dominant-baseline="central">RSA 3072</text>
<text x="891.70" y="749.75" transform="rotate(38.57 891.70 749.75)" font-size="9.4" fill="#1e1e2e" text-anchor="middle" dominant-baseline="central">ECC SECG P...</text>
<text x="870.67" y="772.90" transform="rotate(45.92 870.67 772.90)" font-size="9.4" fill="#1e1e2e" text-anchor="middle" dominant-baseline="central">RSA HSM 20...</text>
<text x="846.86" y="793.17" transform="rotate(53.27 846.86 793.17)" font-size="9.4" fill="#1e1e2e" text-anchor="middle" dominant-baseline="central">RSA 4096</text>
<text x="820.65" y="810.23" transform="rotate(60.61 820.65 810.23)" font-size="9.4" fill="#1e1e2e" text-anchor="middle" dominant-baseline="central">ECC NIST P...</text>
<text x="792.48" y="823.80" transform="rotate(67.96 792.48 823.80)" font-size="9.4" fill="#1e1e2e" text-anchor="middle" dominant-baseline="central">ECC NIST H...</text>
<text x="762.80" y="833.66" transform="rotate(75.31 762.80 833.66)" font-size="9.4" fill="#ffffff" text-anchor="middle" dominant-baseline="central">SEED</text>
<text x="732.11" y="839.63" transform="rotate(82.65 732.11 839.63)" font-size="9.4" fill="#ffffff" text-anchor="middle" dominant-baseline="central">AES 256</text>
<text x="700.90" y="841.64" transform="rotate(-90.00 700.90 841.64)" font-size="9.4" fill="#1e1e2e" text-anchor="middle" dominant-baseline="central">ECC KCDSA...</text>
<text x="669.69" y="839.63" transform="rotate(-82.65 669.69 839.63)" font-size="9.4" fill="#1e1e2e" text-anchor="middle" dominant-baseline="central">DSA 2048</text>
<text x="639.00" y="833.66" transform="rotate(-75.31 639.00 833.66)" font-size="9.4" fill="#1e1e2e" text-anchor="middle" dominant-baseline="central">AES 128</text>
<text x="609.32" y="823.80" transform="rotate(-67.96 609.32 823.80)" font-size="9.4" fill="#1e1e2e" text-anchor="middle" dominant-baseline="central">DES</text>
<text x="581.15" y="810.23" transform="rotate(-60.61 581.15 810.23)" font-size="9.4" fill="#1e1e2e" text-anchor="middle" dominant-baseline="central">BLS</text>
<text x="554.94" y="793.17" transform="rotate(-53.27 554.94 793.17)" font-size="9.4" fill="#1e1e2e" text-anchor="middle" dominant-baseline="central">HMAC 112</text>
<text x="531.13" y="772.90" transform="rotate(-45.92 531.13 772.90)" font-size="9.4" fill="#1e1e2e" text-anchor="middle" dominant-baseline="central">ECC SECG P...</text>
<text x="510.10" y="749.75" transform="rotate(-38.57 510.10 749.75)" font-size="9.4" fill="#1e1e2e" text-anchor="middle" dominant-baseline="central">AES 192</text>
<text x="492.21" y="724.11" transform="rotate(-31.22 492.21 724.11)" font-size="9.4" fill="#ffffff" text-anchor="middle" dominant-baseline="central">HMAC 1024</text>
<text x="477.75" y="696.38" transform="rotate(-23.88 477.75 696.38)" font-size="9.4" fill="#1e1e2e" text-anchor="middle" dominant-baseline="central">RSA 2048</text>
<text x="466.95" y="667.04" transform="rotate(-16.53 466.95 667.04)" font-size="9.4" fill="#1e1e2e" text-anchor="middle" dominant-baseline="central">KCDSA 2048</text>
<text x="459.99" y="636.55" transform="rotate(-9.18 459.99 636.55)" font-size="9.4" fill="#1e1e2e" text-anchor="middle" dominant-baseline="central">Unknown</text>
<text x="456.99" y="605.42" transform="rotate(-1.84 456.99 605.42)" font-size="9.4" fill="#1e1e2e" text-anchor="middle" dominant-baseline="central">ECC NIST P...</text>
<text x="457.99" y="574.17" transform="rotate(5.51 457.99 574.17)" font-size="9.4" fill="#ffffff" text-anchor="middle" dominant-baseline="central">ARIA 128</text>
<text x="462.98" y="543.30" transform="rotate(12.86 462.98 543.30)" font-size="9.4" fill="#ffffff" text-anchor="middle" dominant-baseline="central">LMS</text>
<text x="471.88" y="513.32" transform="rotate(20.20 471.88 513.32)" font-size="9.4" fill="#1e1e2e" text-anchor="middle" dominant-baseline="central">DES3</text>
<text x="484.54" y="484.72" transform="rotate(27.55 484.54 484.72)" font-size="9.4" fill="#1e1e2e" text-anchor="middle" dominant-baseline="central">ECC X448</text>
<text x="500.75" y="457.98" transform="rotate(34.90 500.75 457.98)" font-size="9.4" fill="#1e1e2e" text-anchor="middle" dominant-baseline="central">RSA 2048</text>
<text x="520.24" y="433.53" transform="rotate(42.24 520.24 433.53)" font-size="9.4" fill="#1e1e2e" text-anchor="middle" dominant-baseline="central">AES 128</text>
<text x="542.71" y="411.78" transform="rotate(49.59 542.71 411.78)" font-size="9.4" fill="#1e1e2e" text-anchor="middle" dominant-baseline="central">RSA 512</text>
<text x="567.77" y="393.08" transform="rotate(56.94 567.77 393.08)" font-size="9.4" fill="#1e1e2e" text-anchor="middle" dominant-baseline="central">RSA OAEP</text>
<text x="595.02" y="377.73" transform="rotate(64.29 595.02 377.73)" font-size="9.4" fill="#ffffff" text-anchor="middle" dominant-baseline="central">AES 256</text>
<text x="624.00" y="365.99" transform="rotate(71.63 624.00 365.99)" font-size="9.4" fill="#ffffff" text-anchor="middle" dominant-baseline="central">AES 192</text>
<text x="654.25" y="358.06" transform="rotate(78.98 654.25 358.06)" font-size="9.4" fill="#1e1e2e" text-anchor="middle" dominant-baseline="central">DES3</text>
<text x="685.26" y="354.06" transform="rotate(86.33 685.26 354.06)" font-size="9.4" fill="#1e1e2e" text-anchor="middle" dominant-baseline="central">AEAD AES 2...</text>
</g></svg>
<div class="abs" style="left:421px;top:898px;width:10px;height:10px;border-radius:50%;background:#ff5e3a"></div>
<div class="t" style="left:435px;top:895px;font-size:11.5px;font-weight:bold;line-height:16px">PQC vulnerable</div>
<div class="abs" style="left:529px;top:898px;width:10px;height:10px;border-radius:50%;background:#3d6912"></div>
<div class="t" style="left:543px;top:895px;font-size:11.5px;font-weight:bold;line-height:16px">PQC ready</div>

<!-- right panel -->
<div class="t" style="left:1221px;top:232px;font-size:13.3px;font-weight:normal;-webkit-text-stroke:0.35px #e6e6ee;line-height:16px;color:#e6e6ee;letter-spacing:0.65px">Cloud Connections:</div>
<svg class="abs" style="left:1221px;top:260px" width="17" height="16" viewBox="0 0 17 16">
  <defs><linearGradient id="az1" x1="0" y1="0" x2="0" y2="1"><stop offset="0" stop-color="#114a8b"/><stop offset="1" stop-color="#0669bc"/></linearGradient>
  <linearGradient id="az2" x1="0" y1="0" x2="1" y2="1"><stop offset="0" stop-color="#3ccbf4"/><stop offset="1" stop-color="#2892df"/></linearGradient></defs>
  <path d="M5.5 0.5 H9.5 L4.5 15.5 H0.5 Z" fill="url(#az1)"/><path d="M6.5 0.5 H10.5 L16.5 15.5 H12 Z" fill="url(#az2)"/><path d="M2.5 15.5 L9 9 L12 15.5 Z" fill="#0078d4"/></svg>
<div class="t" style="left:1241px;top:261px;font-size:11.5px;line-height:16px"><b>2</b> Azure</div>
<div class="abs" style="left:1287px;top:260px;width:1px;height:17px;background:#4a4870"></div>
<svg class="abs" style="left:1295px;top:261px" width="18" height="14" viewBox="0 0 18 14"><text x="8.2" y="7.6" font-size="8.6" fill="#e4e4ec" text-anchor="middle" font-family="Liberation Sans" letter-spacing="-0.4">aws</text><path d="M0.6 9.2 Q8 13.6 15.4 9.6" stroke="#f39c12" stroke-width="1.3" fill="none"/><path d="M13.2 8.7 L16.3 9.1 L15.7 12.1" stroke="#f39c12" stroke-width="1.1" fill="none"/></svg>
<div class="t" style="left:1315px;top:261px;font-size:11.5px;line-height:16px"><b>2</b> AWS</div>
<div class="t" style="left:1221px;top:290px;font-size:11.6px;line-height:13.3px;color:#e6e6ee">Vulnerable accounts<br>and subscriptions</div>
<div class="abs" style="left:1381px;top:298px;width:1px;height:68px;background:#3d3b60"></div>
<div class="t" style="left:1221px;top:330.5px;font-size:29px;line-height:30px;transform:scaleX(1.2);transform-origin:left center">4</div>
<div class="t" style="left:1421px;top:296px;font-size:11.8px;line-height:14px;color:#e6e6ee">Vulnerable regions</div>
<div class="t" style="left:1420.5px;top:323.8px;font-size:29px;line-height:30px;transform:scaleX(1.24);transform-origin:left center">8</div>
<div class="t" style="left:1221px;top:373px;font-size:11.7px;line-height:14px;color:#e6e6ee">Vulnerable keys</div>
<div class="t" style="left:1219px;top:402px;font-size:29px;line-height:30px;letter-spacing:-1px">1196</div>
<div class="hr" style="top:455px"></div>

<div class="t" style="left:1221px;top:483px;font-size:13.3px;font-weight:normal;-webkit-text-stroke:0.35px #e6e6ee;line-height:16px;color:#e6e6ee;letter-spacing:0.55px">On-Premises Connections:</div>
<svg class="abs" style="left:1221px;top:510px" width="17" height="17" viewBox="0 0 17 17"><g stroke="#ccc" stroke-width="1" fill="none"><rect x="1" y="1" width="15" height="6.5"/><rect x="1" y="9.5" width="15" height="6.5"/></g><circle cx="4" cy="4" r="0.8" fill="#ccc"/><circle cx="4" cy="12.8" r="0.8" fill="#ccc"/></svg>
<div class="t" style="left:1241px;top:511px;font-size:11.5px;line-height:16px"><b>1</b> Scanner connections</div>
<div class="t" style="left:1221px;top:539px;font-size:11.7px;line-height:14px;color:#e6e6ee">Vulnerable keys</div>
<div class="t" style="left:1220.5px;top:567.5px;font-size:29.5px;line-height:30px;letter-spacing:0.8px">29</div>
<div class="hr" style="top:621px"></div>

<div class="t" style="left:1221px;top:648px;font-size:13.3px;font-weight:normal;-webkit-text-stroke:0.35px #e6e6ee;line-height:16px;color:#e6e6ee;letter-spacing:0.45px">External Key Source Connections:</div>
<svg class="abs" style="left:1220.5px;top:677px" width="18" height="15" viewBox="0 0 18 15"><g stroke="#d0cedc" stroke-width="0.9" fill="none" stroke-linejoin="round" stroke-linecap="round"><path d="M1 5.2 V3.4 Q1 2 2.6 2 H8.8 Q10 0.7 12.2 0.9 Q14.6 1.3 14.4 3.6 L14 5.4"/><path d="M2.6 5.2 H10.8 Q12.6 5.4 13.6 6.4 L16.6 8.2"/><path d="M1.2 8.2 Q0.6 10.8 2.2 12.4 Q3.4 13.8 5.2 13.2 L10 11.4 L14.2 9.6 Q16 8.8 16.6 8.2"/><path d="M4.6 8.6 L8.6 7.8 L11.4 9 M7 10.6 L10 9.8"/><path d="M2.4 10.4 Q3.6 9.8 4.2 11 Q4.4 12.2 3.2 12.4"/></g></svg>
<div class="t" style="left:1241px;top:677px;font-size:11.5px;line-height:16px"><b>3</b> DSM</div>
<div class="t" style="left:1221px;top:705px;font-size:11.7px;line-height:14px;color:#e6e6ee">Vulnerable keys</div>
<div class="t" style="left:1220.5px;top:733.3px;font-size:29.5px;line-height:30px;letter-spacing:0.8px">30</div>
<div class="hr" style="top:787px"></div>
</body></html>
